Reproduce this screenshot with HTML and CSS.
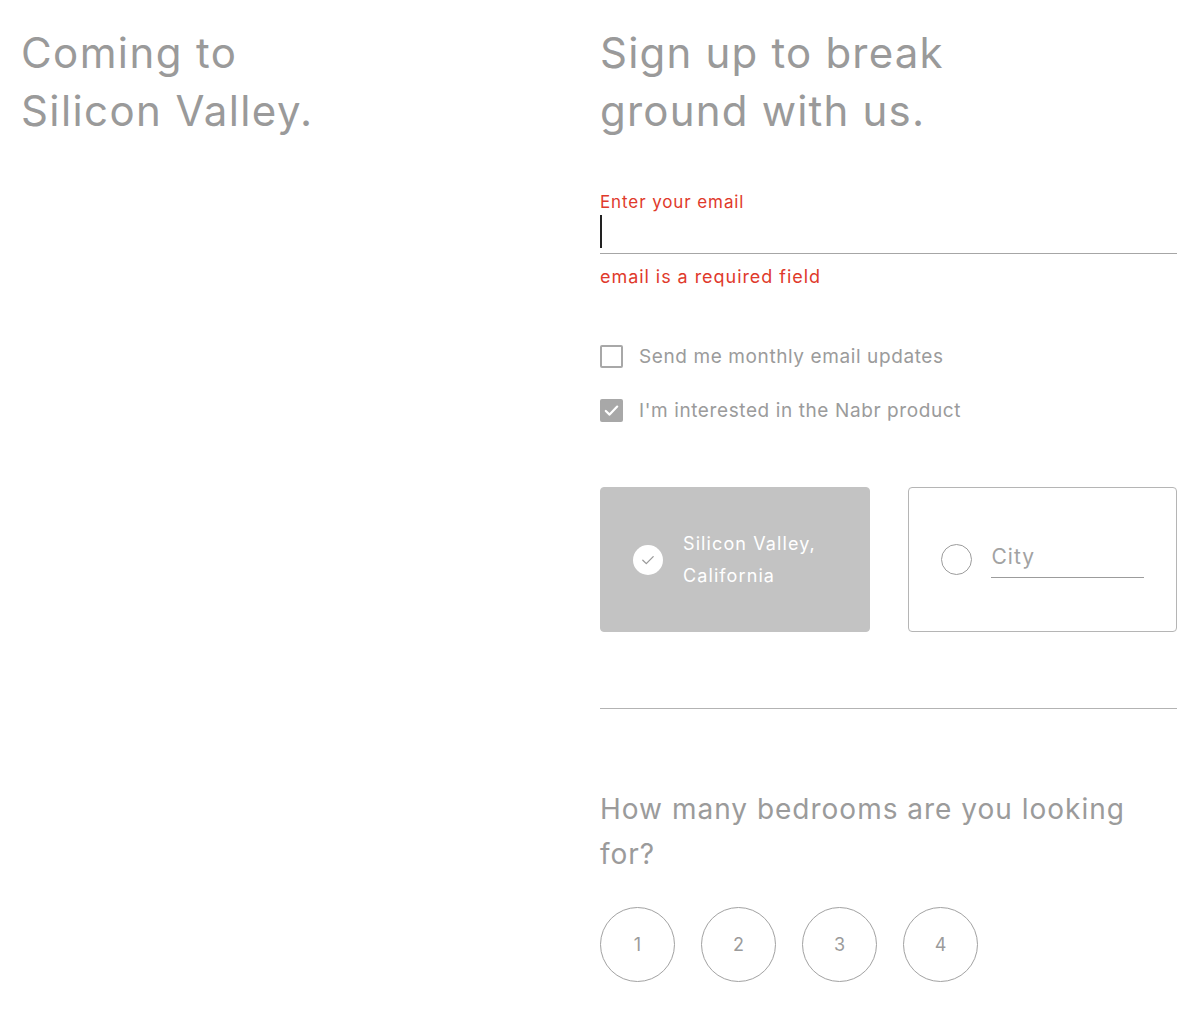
FILE: index.html
```html
<!DOCTYPE html>
<html lang="en">
<head>
<meta charset="utf-8">
<title>Nabr - Silicon Valley</title>
<link rel="stylesheet" href="styles.css">
</head>
<body>
<div class="page">
  <section class="intro">
    <h1 class="headline">Coming to<br>Silicon Valley.</h1>
  </section>
  <section class="signup">
    <h2 class="headline">Sign up to break<br>ground with us.</h2>

    <div class="field">
      <label class="field-label">Enter your email</label>
      <div class="field-input"><span class="caret"></span></div>
      <div class="field-error">email is a required field</div>
    </div>

    <div class="checks">
      <div class="check-row">
        <span class="box"></span>
        <span class="check-label">Send me monthly email updates</span>
      </div>
      <div class="check-row">
        <span class="box checked">
          <svg width="23" height="23" viewBox="0 0 23 23"><path d="M5.8 12 L9.6 15.6 L17.2 7.6" fill="none" stroke="#fff" stroke-width="2.2" stroke-linecap="round" stroke-linejoin="round"/></svg>
        </span>
        <span class="check-label">I'm interested in the Nabr product</span>
      </div>
    </div>

    <div class="cities">
      <div class="city-card selected">
        <span class="radio-on">
          <svg width="30" height="30" viewBox="0 0 30 30"><circle cx="15" cy="15" r="15" fill="#fff"/><path d="M9.8 15.3 L13.3 18.6 L20.2 11.6" fill="none" stroke="#9a9a9a" stroke-width="1.3" stroke-linecap="round" stroke-linejoin="round"/></svg>
        </span>
        <span class="city-name">Silicon Valley,<br>California</span>
      </div>
      <div class="city-card">
        <span class="radio-off"></span>
        <span class="city-input">City</span>
      </div>
    </div>

    <hr class="divider">

    <h3 class="question">How many bedrooms are you looking for?</h3>
    <div class="bedrooms">
      <span class="bed">1</span>
      <span class="bed">2</span>
      <span class="bed">3</span>
      <span class="bed">4</span>
    </div>
  </section>
</div>
</body>
</html>
```

FILE: styles.css
```css
* { box-sizing: border-box; }
html, body { margin: 0; padding: 0; background: #fff; }
body {
  font-family: Inter, "Noto Sans", "Liberation Sans", sans-serif;
  color: #9b9b9b;
}
.page {
  display: grid;
  grid-template-columns: 540px 577px;
  column-gap: 40px;
  padding: 24px 23px 0 20px;
}
.headline {
  margin: 0;
  font-size: 42px;
  line-height: 58px;
  font-weight: 400;
  color: #9a9a9a;
  letter-spacing: 1.2px;
}
.intro .headline { padding-left: 1px; letter-spacing: 1.4px; }
.signup { display: flex; flex-direction: column; }

.field { margin-top: 51px; }
.field-label {
  display: block;
  font-size: 17px;
  line-height: 22px;
  color: #e0392b;
  letter-spacing: 0.9px;
}
.field-input {
  height: 41px;
  border-bottom: 1px solid #a6a6a6;
  padding-top: 2px;
}
.caret {
  display: block;
  width: 1.5px;
  height: 33px;
  background: #222;
}
.field-error {
  margin-top: 11px;
  font-size: 18px;
  line-height: 24px;
  color: #e0392b;
  letter-spacing: 0.95px;
}

.checks {
  margin-top: 56px;
  display: flex;
  flex-direction: column;
  gap: 31px;
}
.check-row {
  display: flex;
  align-items: center;
  gap: 16px;
  height: 23px;
}
.box {
  width: 23px;
  height: 23px;
  border: 2px solid #a8a8a8;
  border-radius: 2px;
  display: block;
  flex: none;
}
.box.checked {
  border: none;
  background: #a8a8a8;
}
.box svg { display: block; }
.check-label {
  font-size: 19px;
  color: #9b9b9b;
  letter-spacing: 0.6px;
}

.cities {
  margin-top: 65px;
  display: grid;
  grid-template-columns: 1fr 1fr;
  column-gap: 38px;
}
.city-card {
  height: 145px;
  border: 1px solid #b5b5b5;
  border-radius: 4px;
  display: flex;
  align-items: center;
  padding-left: 32px;
}
.city-card.selected {
  background: #c3c3c3;
  border-color: #c3c3c3;
}
.radio-on svg { display: block; }
.city-name {
  margin-left: 20px;
  color: #fff;
  font-size: 18px;
  line-height: 32px;
  letter-spacing: 1.1px;
}
.radio-off {
  width: 31px;
  height: 31px;
  border: 1px solid #9c9c9c;
  border-radius: 50%;
  flex: none;
}
.city-input {
  margin-left: 19px;
  width: 153px;
  border-bottom: 1.5px solid #9c9c9c;
  font-size: 21px;
  line-height: 28px;
  padding: 0 0 6px 1px;
  color: #a2a2a2;
  margin-top: 2px;
  letter-spacing: 1px;
}

.divider {
  margin: 76px 0 0 0;
  border: none;
  border-top: 1px solid #b3b3b3;
  height: 0;
}
.question {
  margin: 78px 0 0 0;
  font-size: 28px;
  line-height: 45px;
  font-weight: 400;
  color: #9b9b9b;
  letter-spacing: 1.0px;
}
.bedrooms {
  margin-top: 30px;
  display: flex;
  gap: 26px;
}
.bed {
  width: 75px;
  height: 75px;
  border: 1px solid #a2a2a2;
  border-radius: 50%;
  display: flex;
  align-items: center;
  justify-content: center;
  font-size: 18px;
  color: #9b9b9b;
}
```
